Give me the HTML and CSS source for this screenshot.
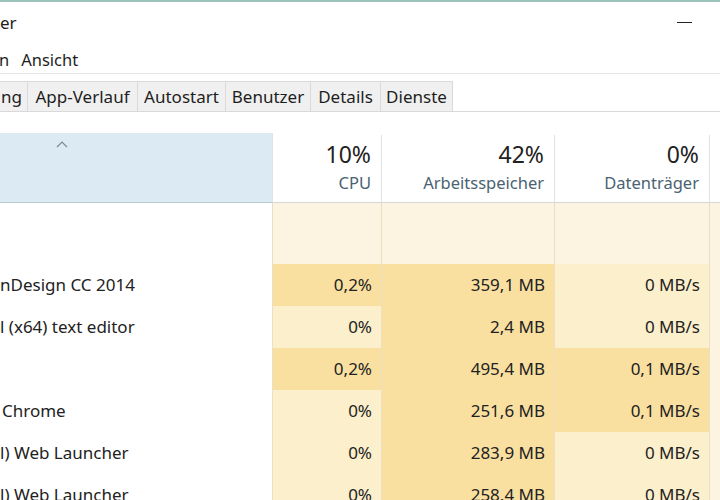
FILE: index.html
```html
<!DOCTYPE html>
<html lang="de">
<head>
  <meta charset="UTF-8">
  <title>Task-Manager</title>
  <link rel="stylesheet" href="styles.css">
</head>
<body>
  <div class="window">
    <div class="titlebar">
      <span class="title">er</span>
      <span class="minimize"></span>
    </div>

    <div class="menubar">
      <span class="menu">n</span>
      <span class="menu">Ansicht</span>
    </div>

    <div class="tabs">
      <div class="tab first">ng</div>
      <div class="tab">App-Verlauf</div>
      <div class="tab">Autostart</div>
      <div class="tab">Benutzer</div>
      <div class="tab">Details</div>
      <div class="tab">Dienste</div>
    </div>

    <div class="table">
      <!-- column headers -->
      <div class="row head">
        <div class="cell name-head">
          <svg class="sort" width="12" height="7" viewBox="0 0 12 7">
            <path d="M1 6 L6 1 L11 6" fill="none" stroke="#7d8a93" stroke-width="1.2"/>
          </svg>
        </div>
        <div class="cell col-head"><span class="pct">10%</span><span class="label">CPU</span></div>
        <div class="cell col-head"><span class="pct">42%</span><span class="label">Arbeitsspeicher</span></div>
        <div class="cell col-head"><span class="pct">0%</span><span class="label">Datenträger</span></div>
        <div class="cell col-head"></div>
      </div>

      <!-- group row -->
      <div class="row group">
        <div class="cell name"></div>
        <div class="cell pale"></div>
        <div class="cell pale"></div>
        <div class="cell pale"></div>
        <div class="cell pale"></div>
      </div>

      <div class="row">
        <div class="cell name">nDesign CC 2014</div>
        <div class="cell num dark">0,2%</div>
        <div class="cell num dark">359,1 MB</div>
        <div class="cell num light">0 MB/s</div>
        <div class="cell pale"></div>
      </div>
      <div class="row">
        <div class="cell name">l (x64) text editor</div>
        <div class="cell num light">0%</div>
        <div class="cell num dark">2,4 MB</div>
        <div class="cell num light">0 MB/s</div>
        <div class="cell pale"></div>
      </div>
      <div class="row">
        <div class="cell name"></div>
        <div class="cell num dark">0,2%</div>
        <div class="cell num dark">495,4 MB</div>
        <div class="cell num dark">0,1 MB/s</div>
        <div class="cell pale"></div>
      </div>
      <div class="row">
        <div class="cell name indent">Chrome</div>
        <div class="cell num light">0%</div>
        <div class="cell num dark">251,6 MB</div>
        <div class="cell num dark">0,1 MB/s</div>
        <div class="cell pale"></div>
      </div>
      <div class="row">
        <div class="cell name">l) Web Launcher</div>
        <div class="cell num light">0%</div>
        <div class="cell num dark">283,9 MB</div>
        <div class="cell num light">0 MB/s</div>
        <div class="cell pale"></div>
      </div>
      <div class="row">
        <div class="cell name">l) Web Launcher</div>
        <div class="cell num light">0%</div>
        <div class="cell num dark">258,4 MB</div>
        <div class="cell num light">0 MB/s</div>
        <div class="cell pale"></div>
      </div>
    </div>
  </div>
</body>
</html>
```

FILE: styles.css
```css
body {
  margin: 0;
  font-family: "Noto Sans", sans-serif;
  color: #1e1e1e;
  background: #fff;
  overflow: hidden;
}

.window {
  width: 720px;
  height: 500px;
  overflow: hidden;
  border-top: 2px solid #9cc4ba;
  box-sizing: border-box;
}

/* title bar */
.titlebar {
  height: 43px;
  display: flex;
  align-items: center;
  justify-content: space-between;
  padding-right: 28px;
  font-size: 17px;
}

.title {
  margin-top: -2px;
}

.minimize {
  width: 15px;
  height: 1px;
  background: #222;
  margin-top: -2px;
}

/* menu bar */
.menubar {
  height: 28px;
  display: flex;
  align-items: center;
  gap: 12px;
  font-size: 16.5px;
  border-bottom: 1px solid #e6e6e6;
  margin-left: -1px;
}

/* tabs */
.tabs {
  display: flex;
  margin-top: 7px;
  border-bottom: 1px solid #d9d9d9;
  height: 30px;
}

.tab {
  display: flex;
  align-items: center;
  justify-content: center;
  background: #f0f0f0;
  border: 1px solid #dadada;
  border-bottom: none;
  border-left: none;
  font-size: 17px;
  padding: 0 5px;
  box-sizing: border-box;
  color: #1e1e1e;
}

.tab.first { width: 28px; padding: 0; justify-content: flex-end; padding-right: 5px; }
.tab:nth-child(2) { width: 110px; }
.tab:nth-child(3) { width: 88px; }
.tab:nth-child(4) { width: 85px; }
.tab:nth-child(5) { width: 70px; }
.tab:nth-child(6) { width: 72px; }

/* process table */
.table {
  margin-top: 21px;
}

.row {
  display: grid;
  grid-template-columns: 273px 109px 173px 155px 10px;
  height: 42px;
}

.cell {
  box-sizing: border-box;
  border-right: 1px solid #ecdfc4;
}

.cell:last-child { border-right: none; }

.head {
  height: 69px;
  border-bottom: 1px solid #d6d6d6;
}

.head .cell {
  border-right: 1px solid #e2e2e2;
}

.name-head {
  background: #dbeaf3;
  border-bottom: 1px solid #b9c9d2;
  margin-bottom: -1px;
  position: relative;
}

.sort {
  position: absolute;
  left: 56px;
  top: 8px;
}

.col-head {
  display: flex;
  flex-direction: column;
  align-items: flex-end;
  padding: 2px 10px 0 0;
  margin-top: 2px;
}

.pct {
  font-size: 23px;
  line-height: 34px;
  color: #222;
}

.label {
  font-size: 16.5px;
  line-height: 24px;
  color: #4a6272;
}

.group {
  height: 61px;
}

.name {
  border-right: 1px solid #ecdfc4;
  font-size: 17px;
  line-height: 42px;
  white-space: nowrap;
  padding-left: 0;
  color: #222;
}

.name.indent { padding-left: 2px; }

.num {
  text-align: right;
  padding-right: 9px;
  font-size: 17px;
  line-height: 42px;
  color: #222;
}

.pale { background: #fdf3e1; }
.light { background: #fcefcb; }
.dark { background: #f9e0a0; }
```
